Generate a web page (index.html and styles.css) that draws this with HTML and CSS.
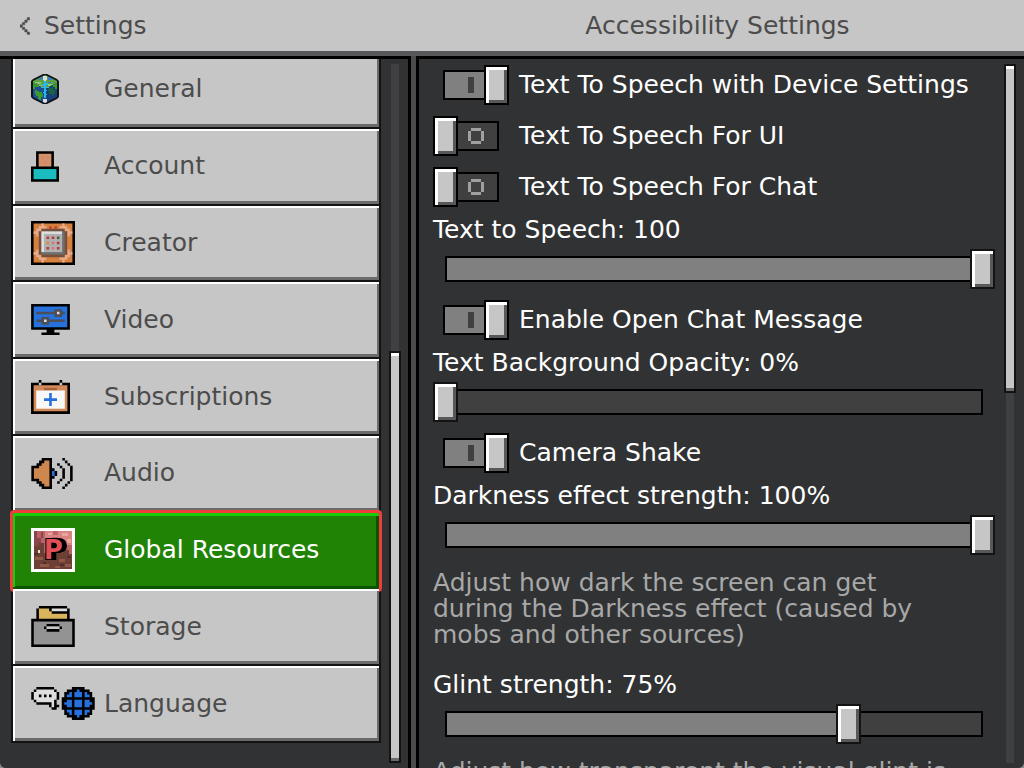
FILE: index.html
```html
<!DOCTYPE html>
<html lang="en">
<head>
<meta charset="UTF-8">
<title>Accessibility Settings</title>
<meta name="viewport" content="width=device-width, initial-scale=1.0">
<link rel="stylesheet" href="styles.css">
</head>
<body>
<div class="screen">
    <header class="header">
        <a class="back" href="#">
            <svg width="12" height="18" viewBox="0 0 5 7"><path fill="#4c4c4c" d="M3 0h1v1h-1zM2 1h1v1h-1zM1 2h1v1h-1zM0 3h1v1h-1zM1 4h1v1h-1zM2 5h1v1h-1zM3 6h1v1h-1z" stroke="#4c4c4c" stroke-width=".2"/></svg>
            <span>Settings</span>
        </a>
        <h1 class="title">Accessibility Settings</h1>
    </header>

    <div class="panes">
        <aside class="sidebar">
            <nav class="menu">
                <button class="item" type="button">
                    <span class="icon">
                        <svg width="28" height="30" viewBox="0 0 28 30">
                            <path fill="#101418" d="M12 0h4l10 5l2 2v16l-2 2l-10 5h-4l-10 -5l-2 -2v-16l2 -2z"/>
                            <path fill="#5f9f45" d="M14 1l12 6v2l-12 6l-12 -6v-2z"/>
                            <path fill="#1e4f94" d="M2 9l12 6v14l-12 -6z"/>
                            <path fill="#173f78" d="M26 9l-12 6v14l12 -6z"/>
                            <path fill="#3a9a2b" d="M4 16h2v1h2v1h3v2h1v3h-2v3h-2v-1h-1v-3h-2v-2h-1zM2 9l6 3v1h-4v2h-2zM26 9l-4 2v2h2v2h2z"/>
                            <path fill="#1c6440" d="M18 14h3v-1h1v3h2v4h-2v2h-1v-2h-3v-3h-1v-2h1z"/>
                            <path fill="#2c7be0" d="M9 4l3 -1v2h-2v1h-2v-1h1zM17 3l4 2v1h-4zM17 8h3v1h-3z"/>
                            <path fill="#8acb76" d="M4 8h6v2h-3v-1h-3zM17 10h5v1h-2v1h-3zM8 11h3v1h-3z"/>
                            <path fill="#dcdcdc" d="M12 2h4v4h-1v1h-2v-1h-1zM12 25h4v3l-2 1l-2 -1z"/>
                            <path fill="#29b8e8" d="M13 7h2v2h2v2h-2v2h3v1h-3v2h1v1h-1v3h1v1h-1v3h-2v-5h-1v-1h1v-4h-3v-1h3v-1h-2v-2h2z"/>
                        </svg>
                    </span>
                    General
                </button>
                <button class="item" type="button">
                    <span class="icon">
                        <svg width="28" height="31" viewBox="0 0 11 12">
                            <path fill="#000" d="M2 0h7v6h2v6h-11v-6h2z"/>
                            <path fill="#d5916a" d="M3 1h5v5h-5z"/>
                            <path fill="#c57a68" d="M4 2h1v1h-1zM6 2h1v1h-1zM5 4h1v1h-1z" opacity=".4"/>
                            <path fill="#1bbcc0" d="M1 7h9v4h-9z"/>
                        </svg>
                    </span>
                    Account
                </button>
                <button class="item" type="button">
                    <span class="icon">
                        <svg width="44" height="44" viewBox="0 0 17 17">
                            <path fill="#000" d="M0 0h17v17h-17z"/>
                            <path fill="#d5803f" d="M1 1h15v15h-15z"/>
                            <path fill="#e8aa8a" d="M4 1h1v1h1v1h-2v1h-1v2h-1v-1h-1v-1h1v-1h1v-1h1zM13 1h-1v1h-1v1h2v1h1v2h1v-1h1v-1h-1v-1h-1v-1h-1zM4 16h1v-1h1v-1h-2v-1h-1v-2h-1v1h-1v1h1v1h1v1h1zM13 16h-1v-1h-1v-1h2v-1h1v-2h1v1h1v1h-1v1h-1v1h-1z"/>
                            <path fill="#c4402a" d="M7 2h1v1h-1zM9 2h1v1h-1z"/>
                            <path fill="#765039" d="M3 4h1v-1h9v1h1v9h-1v1h-9v-1h-1z"/>
                            <path fill="#6f6f6f" d="M4 4h9v9h-9z"/>
                            <path fill="#dedede" d="M4 4h8v8h-8z"/>
                            <path fill="#b0b0b0" d="M5 5h7v7h-7z"/>
                            <path fill="#b93640" d="M6 6h1v1h-1zM8 6h1v1h-1zM10 8h1v1h-1zM6 10h1v1h-1zM10 10h1v1h-1z"/>
                            <path fill="#e07080" d="M8 8h1v1h-1zM8 10h1v1h-1z"/>
                            <path fill="#e08a30" d="M6 8h1v1h-1z"/>
                            <path fill="#46643a" d="M10 6h1v1h-1z"/>
                        </svg>
                    </span>
                    Creator
                </button>
                <button class="item" type="button">
                    <span class="icon">
                        <svg width="39" height="31" viewBox="0 0 15 12">
                            <path fill="#000" d="M0 0h15v10h-6v1h2v1h-7v-1h2v-1h-6z"/>
                            <path fill="#2671dc" d="M1 1h13v8h-13z"/>
                            <path fill="#4c4f57" d="M2 3h7v-1h3v1h1v1h-1v1h-3v-1h-7zM2 6h2v-1h3v1h6v1h-6v1h-3v-1h-2z"/>
                            <path fill="#dcdcdc" d="M10 3h1v1h-1zM5 6h1v1h-1z"/>
                        </svg>
                    </span>
                    Video
                </button>
                <button class="item" type="button">
                    <span class="icon">
                        <svg width="39" height="34" viewBox="0 0 15 13">
                            <path fill="#000" d="M0 1h3v-1h1v1h7v-1h1v1h3v12h-15z"/>
                            <path fill="#d38a5a" d="M1 2h13v10h-13z"/>
                            <path fill="#a4633c" d="M5 3h5v1h-5z"/>
                            <path fill="#c6c6c6" d="M3 1h1v1h-1zM11 1h1v1h-1z"/>
                            <path fill="#f8f8f8" d="M2 4h11v7h-11z"/>
                            <path fill="#2671dc" d="M7 5h1v2h2v1h-2v2h-1v-2h-2v-1h2z"/>
                        </svg>
                    </span>
                    Subscriptions
                </button>
                <button class="item" type="button">
                    <span class="icon">
                        <svg width="42" height="31" viewBox="0 0 16 12">
                            <path fill="#000" d="M4 0h4v4h1v1h1v2h-1v1h-1v4h-4v-1h-1v-1h-1v-1h-2v-6h2v-1h1v-1h1z"/>
                            <path fill="#cf8750" d="M4 2h1v-1h2v10h-2v-1h-1v-1h-1v-1h-2v-4h2v-1h1z"/>
                            <path fill="#2671dc" d="M8 5h1v2h-1z"/>
                            <path fill="#000" d="M10 2h1v1h-1zM11 3h1v1h-1zM12 4h1v4h-1zM11 8h1v1h-1zM10 9h1v1h-1zM12 0h1v1h-1zM13 1h1v1h-1zM14 2h1v1h-1zM15 3h1v6h-1zM14 9h1v1h-1zM13 10h1v1h-1zM12 11h1v1h-1z"/>
                        </svg>
                    </span>
                    Audio
                </button>
                <button class="item active" type="button">
                    <span class="icon">
                        <svg class="pack" width="44" height="44" viewBox="0 0 44 44">
                            <path fill="#fff" d="M0 0h44v44h-44z"/>
                            <path fill="#b96468" d="M3 3h38v38h-38z"/>
                            <path fill="#d98482" d="M14 3h8v4h5v-4h14v14h-6v-4h-8v-4h-6v2h-7z"/>
                            <path fill="#e8a69c" d="M31 5h6v3h-6zM36 11h4v4h-4zM17 5h4v2h-4z"/>
                            <path fill="#8b454b" d="M3 3h3v7h4v8h-4v5h-3zM10 4h2v6h-2zM30 18h3v4h-3z"/>
                            <path fill="#6e4035" d="M3 18h5v-3h5v10h19v-3h6v4h3v15h-38z"/>
                            <path fill="#8e5a46" d="M4 29h8v3h-8zM9 36h9v3h-9zM28 31h6v3h-6zM34 36h6v3h-6zM24 38h5v2h-5z"/>
                            <path fill="#4e3027" d="M3 25h4v2h-4zM12 34h3v2h-3zM29 36h4v2h-4zM36 28h4v2h-4z"/>
                            <path fill="#e8dede" d="M7 22h2v3h-2z"/>
                            <text x="13" y="31">P</text>
                        </svg>
                    </span>
                    Global Resources
                </button>
                <button class="item" type="button">
                    <span class="icon">
                        <svg width="44" height="41" viewBox="0 0 17 16">
                            <path fill="#000" d="M3 0h11v1h1v4h2v11h-17v-11h2v-4h1z"/>
                            <path fill="#d9b45c" d="M3 1h4v1h1v1h6v2h-11z"/>
                            <path fill="#dedede" d="M8 1h6v1h-6z"/>
                            <path fill="#939393" d="M1 6h15v9h-15z"/>
                            <path fill="#000" d="M6 7h5v1h-5zM5 8h1v1h-1zM11 8h1v1h-1zM6 9h5v1h-5z"/>
                            <path fill="#c6c6c6" d="M6 8h5v1h-5z"/>
                        </svg>
                    </span>
                    Storage
                </button>
                <button class="item" type="button">
                    <span class="icon">
                        <svg width="64" height="33" viewBox="0 0 25 13">
                            <path fill="#000" d="M2 0h7v1h1v1h1v3h-1v2h1v1h-1v1h-2v-1h-1v-1h-5v-1h-1v-1h-1v-3h1v-1h1z"/>
                            <path fill="#dedede" d="M2 1h7v1h1v3h-1v3h-1v-2h-6v-1h-1v-3h1z"/>
                            <path fill="#000" d="M3 3h1v1h-1zM5 3h1v1h-1zM7 3h1v1h-1z"/>
                            <path fill="#000" d="M16 0h5v1h2v1h1v2h1v5h-1v2h-1v1h-2v1h-5v-1h-2v-1h-1v-2h-1v-5h1v-2h1v-1h2z"/>
                            <path fill="#2671dc" d="M17 2h1v-1h1v1h1v2h-3zM15 2h1v2h-2v-1h1zM21 2h1v1h1v1h-2zM17 5h3v3h-3zM14 5h2v3h-2v-1h-1v-1h1zM21 5h2v1h1v1h-1v1h-2zM17 9h3v2h-1v1h-1v-1h-1zM14 9h2v2h-1v-1h-1zM21 9h2v1h-1v1h-1z"/>
                        </svg>
                    </span>
                    Language
                </button>
            </nav>
            <div class="scrollbar at-end"><div class="thumb" style="height: 59%"></div></div>
        </aside>

        <main class="content">
            <form class="options">
                <label class="toggle"><input type="checkbox" checked>Text To Speech with Device Settings</label>
                <label class="toggle"><input type="checkbox">Text To Speech For UI</label>
                <label class="toggle"><input type="checkbox">Text To Speech For Chat</label>

                <div class="slider">
                    <label for="speech">Text to Speech: 100</label>
                    <input id="speech" type="range" min="0" max="100" value="100" style="--value: 100%">
                </div>

                <label class="toggle"><input type="checkbox" checked>Enable Open Chat Message</label>

                <div class="slider">
                    <label for="opacity">Text Background Opacity: 0%</label>
                    <input id="opacity" type="range" min="0" max="100" value="0" style="--value: 0%">
                </div>

                <label class="toggle"><input type="checkbox" checked>Camera Shake</label>

                <div class="slider">
                    <label for="darkness">Darkness effect strength: 100%</label>
                    <input id="darkness" type="range" min="0" max="100" value="100" style="--value: 100%">
                    <p class="hint">Adjust how dark the screen can get during the Darkness effect (caused by mobs and other sources)</p>
                </div>

                <div class="slider">
                    <label for="glint">Glint strength: 75%</label>
                    <input id="glint" type="range" min="0" max="100" value="75" style="--value: 75%">
                    <p class="hint">Adjust how transparent the visual glint is on enchanted items</p>
                </div>
            </form>
            <div class="scrollbar"><div class="thumb" style="height: 47%"></div></div>
        </main>
    </div>
</div>
</body>
</html>
```

FILE: styles.css
```css
*,
*:before,
*:after {
    box-sizing: border-box;
    margin: 0;
    padding: 0;
}

body {
    background: #8b8b8b;
    color: #fff;
    font: 25px/24px "DejaVu Sans", sans-serif;
}

.screen {
    display: flex;
    flex-direction: column;
    height: 100vh;
    border-radius: 0 0 6px 6px;
    overflow: hidden;
    background: #4c4c4c;
}

/* header */

.header {
    display: grid;
    grid-template-columns: 411px 1fr;
    align-items: center;
    flex: none;
    height: 56px;
    border-bottom: 5px solid #58585a;
    background: #c6c6c6;
    color: #4c4c4c;
}

.back {
    display: flex;
    align-items: center;
    gap: 12px;
    padding-left: 20px;
    color: inherit;
    text-decoration: none;
}

.title {
    font-size: 25px;
    font-weight: normal;
    text-align: center;
}

/* panes */

.panes {
    display: grid;
    grid-template-columns: 411px 1fr;
    gap: 5px;
    flex: 1;
    min-height: 0;
}

.sidebar,
.content {
    display: flex;
    min-height: 0;
    overflow: hidden;
    border-top: 3px solid #000;
    background: #313233;
}

.sidebar {
    gap: 8px;
    padding: 0 7px 0 11px;
    border-right: 3px solid #000;
}

.content {
    gap: 9px;
    padding: 0 8px 0 14px;
    border-left: 3px solid #000;
}

/* side menu, scrolled a little so the first item is cut */

.menu {
    display: flex;
    flex-direction: column;
    flex: 1;
    margin: -7px 0 25px;
    border: solid #131313;
    border-width: 0 2px;
}

.item {
    display: flex;
    align-items: center;
    gap: 9px;
    flex: 1;
    min-height: 0;
    padding-left: 18px;
    border: none;
    border-bottom: 2px solid #131313;
    background: #c6c6c6;
    box-shadow: inset 2px 2px #fff, inset -2px -3px #6a6a6b;
    color: #4c4c4c;
    font: inherit;
    text-align: left;
}

.item.active {
    outline: 3px solid #f03c3c;
    border-radius: 1px;
    border-bottom-color: #0b5500;
    background: #218306;
    box-shadow: inset 2px 3px #17cd07, inset -3px -1px #0b5500;
    color: #fff;
}

.icon {
    flex: none;
    width: 64px;
}

.icon svg {
    display: block;
}

.pack text {
    fill: #e04e56;
    stroke: #000;
    stroke-width: 2px;
    paint-order: stroke;
    font: bold 26px "DejaVu Sans", sans-serif;
    filter: drop-shadow(2px 0 0 #000) drop-shadow(2px 0 0 #000);
}

/* scrollbars */

.scrollbar {
    display: flex;
    flex-direction: column;
    flex: none;
    width: 12px;
    margin: 5px 0;
    background: linear-gradient(#404040, #404040) center / 8px 100% no-repeat;
}

.scrollbar.at-end {
    justify-content: flex-end;
}

.thumb {
    border: 2px solid #131313;
    background: #c6c6c6;
    box-shadow: inset 0 3px #fff, inset 0 -3px #6a6a6b;
}

/* options */

.options {
    display: flex;
    flex-direction: column;
    gap: 11px;
    flex: 1;
    padding-top: 6px;
}

.toggle {
    display: flex;
    align-items: center;
    gap: 10px;
    flex: none;
}

.toggle input {
    -webkit-appearance: none;
            appearance: none;
    display: flex;
    align-items: center;
    flex: none;
    width: 76px;
    height: 40px;
}

.toggle input:checked {
    flex-direction: row-reverse;
}

.toggle input:before {
    content: '';
    width: 25px;
    height: 40px;
    border: 2px solid #000;
    background: #c6c6c6;
    box-shadow: inset 3px 3px #fff, inset -3px -3px #58585a;
}

.toggle input:after {
    content: '';
    width: 41px;
    height: 30px;
    border: 2px solid #000;
    border-left: none;
    background:
        linear-gradient(#404040, #404040) 13px center / 10px 10px no-repeat,
        linear-gradient(#a0a0a0, #a0a0a0) 13px center / 10px 16px no-repeat,
        linear-gradient(#a0a0a0, #a0a0a0) 10px center / 16px 10px no-repeat,
        #404040;
}

.toggle input:checked:after {
    border-left: 2px solid #000;
    border-right: none;
    background: linear-gradient(#404040, #404040) 23px center / 6px 16px no-repeat, #808080;
}

.slider {
    display: flex;
    flex-direction: column;
    flex: none;
    gap: 7px;
}

.slider input {
    -webkit-appearance: none;
            appearance: none;
    width: 100%;
    height: 40px;
    background:
        linear-gradient(to right, #808080 var(--value), #404040 var(--value)) center / calc(100% - 28px) 22px no-repeat,
        linear-gradient(#000, #000) center / calc(100% - 24px) 26px no-repeat;
}

.slider input::-webkit-slider-thumb {
    -webkit-appearance: none;
    width: 25px;
    height: 40px;
    border: 2px solid #131313;
    background: #c6c6c6;
    box-shadow: inset 3px 3px #fff, inset -3px -3px #58585a;
}

.hint {
    max-width: 520px;
    padding: 8px 0 14px;
    color: #a8a8a8;
    line-height: 26px;
}
```
